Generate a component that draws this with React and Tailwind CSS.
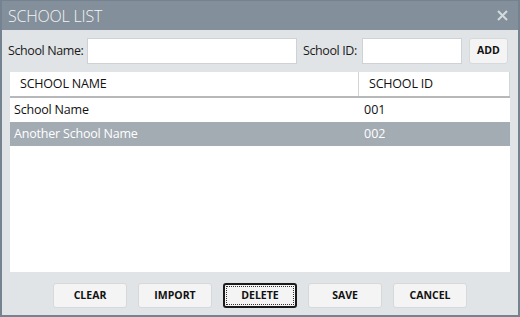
import React from 'react';

const rows = [
  { name: 'School Name', id: '001', selected: false },
  { name: 'Another School Name', id: '002', selected: true },
];

const buttons = ['CLEAR', 'IMPORT', 'DELETE', 'SAVE', 'CANCEL'];

export default function App() {
  return (
    <div
      className="w-[520px] h-[317px] flex flex-col border-x-2 border-b-2 border-t border-[#74838f] bg-[#e1e4e7]"
      style={{ fontFamily: '"Open Sans", "Noto Sans", sans-serif' }}
    >
      {/* Title bar */}
      <div className="h-[29px] shrink-0 bg-[#838f9a] flex items-center justify-between pl-[6px] pr-[10px]">
        <span className="text-[16px] font-light tracking-[-0.2px] text-[#f2f4f6] leading-none">SCHOOL LIST</span>
        <svg width="11" height="11" viewBox="0 0 11 11" className="text-[#d5dadf]">
          <path d="M1 1L10 10M10 1L1 10" stroke="currentColor" strokeWidth="2" />
        </svg>
      </div>

      {/* Form row */}
      <div className="flex items-center pt-[8px] pl-[6px] h-[34px] shrink-0 text-[12.5px] text-[#1a1a1a] whitespace-nowrap">
        <span className="w-[79px] shrink-0 tracking-[-0.4px]">School Name:</span>
        <input className="w-[210px] shrink-0 h-[26px] bg-white border border-[#cfd2d5] outline-none" />
        <span className="ml-[6px] w-[59px] shrink-0 tracking-[-0.4px]">School ID:</span>
        <input className="w-[100px] shrink-0 h-[26px] bg-white border border-[#cfd2d5] outline-none" />
        <button className="ml-[7px] w-[39px] shrink-0 h-[26px] rounded-[3px] bg-[#f4f4f4] border border-[#d6d8da] text-[10.5px] font-bold text-[#111]">
          ADD
        </button>
      </div>

      {/* Table */}
      <div className="mx-[8px] mt-[8px] h-[200px] shrink-0 bg-white flex flex-col text-[12.5px]">
        <div className="flex h-[26px] border-b-2 border-[#b6b8ba] text-[#111] tracking-[-0.2px]">
          <div className="w-[349px] border-r border-[#d3d5d7] flex items-center pl-[10px]">SCHOOL NAME</div>
          <div className="flex-1 flex items-center pl-[10px] border-r border-[#d3d5d7]">SCHOOL ID</div>
        </div>
        {rows.map((r) => (
          <div
            key={r.id}
            className={`flex h-[24px] items-center ${r.selected ? 'bg-[#a3abb3] text-white' : 'text-[#111]'}`}
          >
            <div className="w-[350px] pl-[4px] tracking-[-0.2px]">{r.name}</div>
            <div className="flex-1 pl-[4px]">{r.id}</div>
          </div>
        ))}
      </div>

      {/* Bottom buttons */}
      <div className="flex justify-center gap-[11px] mt-[11px]">
        {buttons.map((b) =>
          b === 'DELETE' ? (
            <button
              key={b}
              className="w-[74px] h-[25px] rounded-[3px] bg-[#f4f4f4] border-2 border-[#1a1a1a] p-[1px] text-[10.5px] font-bold text-[#111]"
            >
              <span className="flex h-full w-full items-center justify-center border border-dotted border-[#333]">{b}</span>
            </button>
          ) : (
            <button
              key={b}
              className="w-[74px] h-[25px] rounded-[3px] bg-[#f4f4f4] border border-[#d6d8da] text-[10.5px] font-bold text-[#111]"
            >
              {b}
            </button>
          )
        )}
      </div>
    </div>
  );
}
